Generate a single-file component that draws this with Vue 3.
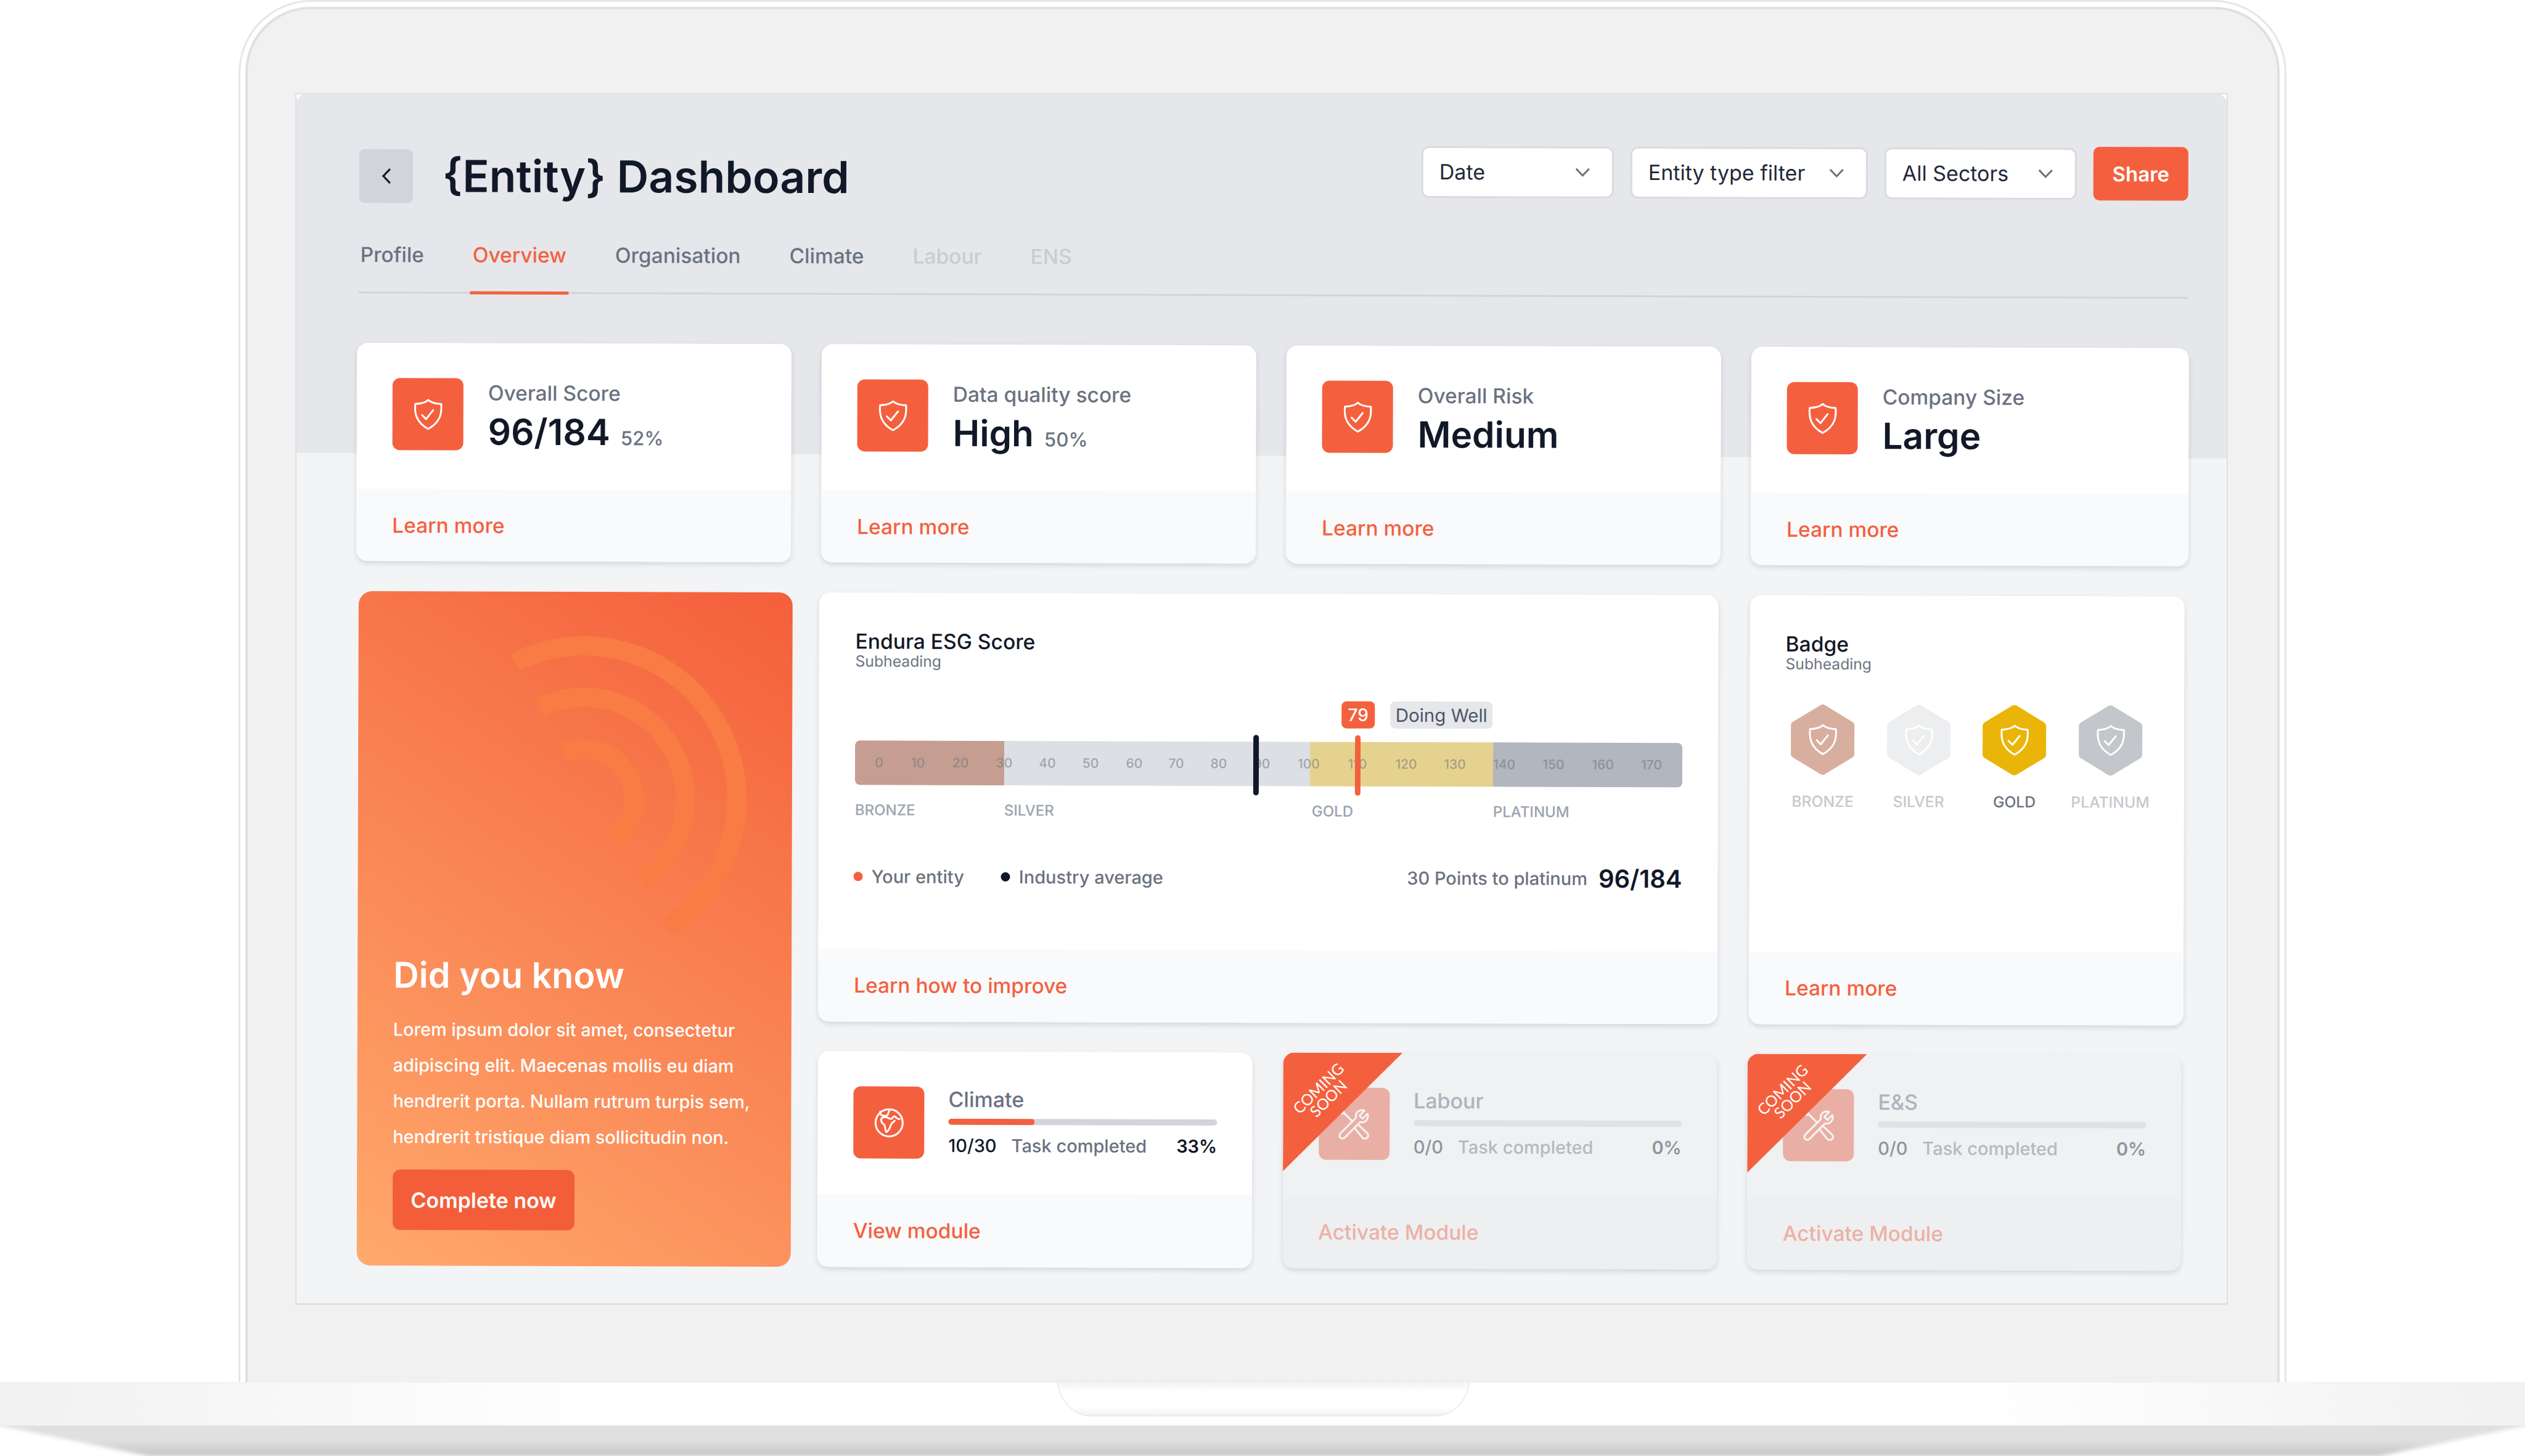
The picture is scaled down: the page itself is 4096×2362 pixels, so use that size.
<script setup>
const stats = [
  { label: 'Overall Score', value: '96/184', sub: '52%' },
  { label: 'Data quality score', value: 'High', sub: '50%' },
  { label: 'Overall Risk', value: 'Medium', sub: '' },
  { label: 'Company Size', value: 'Large', sub: '' },
]
const tabs = [
  { name: 'Profile' },
  { name: 'Overview', active: true },
  { name: 'Organisation' },
  { name: 'Climate' },
  { name: 'Labour', off: true },
  { name: 'ENS', off: true },
]
const filters = ['Date', 'Entity type filter', 'All Sectors']
const segments = [
  { name: 'BRONZE', width: 242, color: '#c59e91' },
  { name: 'SILVER', width: 496, color: '#dcdfe4' },
  { name: 'GOLD', width: 297, color: '#e6d28f' },
  { name: 'PLATINUM', width: 307, color: '#b2b6be' },
]
const ticks = [
  [0, 39], [10, 102], [20, 171], [30, 242], [40, 312], [50, 382], [60, 453], [70, 521], [80, 590],
  [90, 660], [100, 736], [110, 815], [120, 894], [130, 973], [140, 1053], [150, 1133], [160, 1213], [170, 1292],
]
const badges = [
  { name: 'BRONZE', color: '#d8ae9f' },
  { name: 'SILVER', color: '#edeef0' },
  { name: 'GOLD', color: '#eab508', on: true },
  { name: 'PLATINUM', color: '#c3c6ca' },
]
const cx = 366
const cy = 336
function arc(r, a, b) {
  const pt = (d) => {
    const t = (d * Math.PI) / 180
    return `${(cx + r * Math.sin(t)).toFixed(1)} ${(cy - r * Math.cos(t)).toFixed(1)}`
  }
  return `M${pt(a)} A${r} ${r} 0 0 1 ${pt(b)}`
}
const rings = [arc(248, -27, 147), arc(165, -26, 145), arc(81, -23, 142)]
const soon = [
  { title: 'Labour', action: 'Activate Module' },
  { title: 'E&S', action: 'Activate Module' },
]
</script>

<template>
  <div class="page">
    <div class="shell">
      <div class="bezel">
        <div class="screen">
          <main class="content">
            <header class="topbar">
              <div class="title-group">
                <button class="back" aria-label="Back">
                  <svg width="16" height="27" viewBox="0 0 16 27"><path d="M14 2 L3 13.5 L14 25" fill="none" stroke="#111827" stroke-width="3" /></svg>
                </button>
                <h1>{Entity} Dashboard</h1>
              </div>
              <div class="filters">
                <div v-for="f in filters" :key="f" class="filter">
                  <span>{{ f }}</span>
                  <svg width="25" height="15" viewBox="0 0 25 15"><path d="M2 2 L12.5 13 L23 2" fill="none" stroke="#6b7280" stroke-width="3" /></svg>
                </div>
                <button class="share">Share</button>
              </div>
            </header>

            <nav class="tabs">
              <a v-for="t in tabs" :key="t.name" class="tab" :class="{ active: t.active, off: t.off }">{{ t.name }}</a>
            </nav>

            <section class="stats">
              <article v-for="s in stats" :key="s.label" class="card stat">
                <div class="card-top stat-top">
                  <div class="icon-box">
                    <svg width="48" height="50" viewBox="0 0 48 50"><path d="M24 1.5 C28 5.5 35 7.5 45 8 C46.5 24 43 38 24 48.5 C5 38 1.5 24 3 8 C13 7.5 20 5.5 24 1.5 Z M14 26 L20.5 32.5 L32 18" fill="none" stroke="#fff" stroke-width="3" stroke-linecap="round" stroke-linejoin="round" /></svg>
                  </div>
                  <div class="stat-text">
                    <div class="stat-label">{{ s.label }}</div>
                    <div class="stat-value">{{ s.value }}<small v-if="s.sub">{{ s.sub }}</small></div>
                  </div>
                </div>
                <div class="card-foot stat-foot"><a class="link">Learn more</a></div>
              </article>
            </section>

            <section class="lower">
              <article class="promo">
                <svg class="rings" width="704" height="800" viewBox="0 0 704 800">
                  <path v-for="(d, i) in rings" :key="i" :d="d" fill="none" stroke="#fa7c45" stroke-width="31" />
                </svg>
                <h2>Did you know</h2>
                <p>Lorem ipsum dolor sit amet, consectetur<br />adipiscing elit. Maecenas mollis eu diam<br />hendrerit porta. Nullam rutrum turpis sem,<br />hendrerit tristique diam sollicitudin non.</p>
                <button class="cta">Complete now</button>
              </article>

              <div class="right-col">
                <div class="score-row">
                  <article class="card esg">
                    <div class="esg-body">
                      <h3>Endura ESG Score</h3>
                      <div class="subheading">Subheading</div>
                      <div class="chips"><span class="chip-score">79</span><span class="chip-text">Doing Well</span></div>
                      <div class="bar">
                        <div v-for="s in segments" :key="s.name" class="segment" :style="{ width: s.width + 'px', background: s.color }"></div>
                        <span v-for="t in ticks" :key="t[0]" class="tick" :style="{ left: t[1] + 'px' }">{{ t[0] }}</span>
                        <i class="marker marker-dark"></i>
                        <i class="marker marker-orange"></i>
                      </div>
                      <div class="tiers">
                        <span v-for="s in segments" :key="s.name" :style="{ width: s.width + 'px' }">{{ s.name }}</span>
                      </div>
                      <div class="legend">
                        <span class="legend-item"><i class="dot dot-orange"></i>Your entity</span>
                        <span class="legend-item"><i class="dot dot-dark"></i>Industry average</span>
                        <span class="points">30 Points to platinum<b>96/184</b></span>
                      </div>
                    </div>
                    <div class="card-foot esg-foot"><a class="link">Learn how to improve</a></div>
                  </article>

                  <article class="card badge-card">
                    <div class="badge-body">
                      <h3>Badge</h3>
                      <div class="subheading">Subheading</div>
                      <div class="badges">
                        <div v-for="b in badges" :key="b.name" class="badge" :class="{ on: b.on }">
                          <svg width="105" height="116" viewBox="0 0 105 116">
                            <path d="M52.5 8 L97 35 V81 L52.5 108 L8 81 V35 Z" :fill="b.color" :stroke="b.color" stroke-width="14" stroke-linejoin="round" />
                            <g transform="translate(29 33)">
                              <path d="M24 1.5 C28 5.5 35 7.5 45 8 C46.5 24 43 38 24 48.5 C5 38 1.5 24 3 8 C13 7.5 20 5.5 24 1.5 Z M14 26 L20.5 32.5 L32 18" fill="none" stroke="#fff" stroke-width="3" stroke-linecap="round" stroke-linejoin="round" />
                            </g>
                          </svg>
                          <span>{{ b.name }}</span>
                        </div>
                      </div>
                    </div>
                    <div class="card-foot esg-foot"><a class="link">Learn more</a></div>
                  </article>
                </div>

                <div class="module-row">
                  <article class="card module">
                    <div class="card-top module-top">
                      <div class="icon-box">
                        <svg width="48" height="48" viewBox="0 0 48 48"><g fill="none" stroke="#fff" stroke-width="3" stroke-linecap="round" stroke-linejoin="round"><circle cx="24" cy="24" r="22" /><path d="M9.5 6 C9 9 10 12 13 12 C16 12 18 13.5 20 12.5 C23 11 23 6 24.5 2.5" /><path d="M41 18 C38 18 36 16 33 13.5 C30 13 30 16 28 17.5 C24 18.5 21 14 17 14.5 C13 15 11 17 11 19 C11 23 13 25 16 27 C18 30 17 35 19.5 39 C23 38 25 33 27 27 C28 23 32 23 33 20.5" /></g></svg>
                      </div>
                      <div class="module-text">
                        <div class="module-title">Climate</div>
                        <div class="track"><div class="fill" :style="{ width: '32%' }"></div></div>
                        <div class="module-stats"><b>10/30</b><span>Task completed</span><b class="pct">33%</b></div>
                      </div>
                    </div>
                    <div class="card-foot module-foot"><a class="link">View module</a></div>
                  </article>

                  <article v-for="m in soon" :key="m.title" class="card module disabled">
                    <div class="card-top module-top">
                      <div class="icon-box">
                        <svg width="50" height="50" viewBox="0 0 50 50"><g fill="none" stroke="#f3f4f6" stroke-width="3" stroke-linecap="round" stroke-linejoin="round"><path d="M42 3 L34 11 L39 16 L47 8 C50 16 43 24 35 21.5 L11 46 C8 49 5 49 3 47 C1 45 1 42 4 39 L28.5 14.5 C26 7 33 0 42 3 Z" /><path d="M32 26 L46 39 C49 42 49 44 47 46.5 C45 49 41 49 39 47 L26 31" /><path d="M22 20 L9 7 L5 8 L2 5 L4.5 2 L8 5 L9 7" /></g></svg>
                      </div>
                      <div class="module-text">
                        <div class="module-title">{{ m.title }}</div>
                        <div class="track"></div>
                        <div class="module-stats"><b>0/0</b><span>Task completed</span><b class="pct">0%</b></div>
                      </div>
                    </div>
                    <div class="card-foot module-foot"><a class="link">{{ m.action }}</a></div>
                    <div class="ribbon"><div class="ribbon-text">COMING<br />SOON</div></div>
                  </article>
                </div>
              </div>
            </section>
          </main>
        </div>
      </div>
    </div>

    <div class="base">
      <svg class="notch" width="671" height="60" viewBox="0 0 671 60">
        <defs>
          <linearGradient id="notchFill" x1="0" y1="0" x2="0" y2="1">
            <stop offset="0" stop-color="#efefef" />
            <stop offset="0.3" stop-color="#ffffff" />
            <stop offset="0.75" stop-color="#ffffff" />
            <stop offset="1" stop-color="#f2f2f2" />
          </linearGradient>
        </defs>
        <path d="M1 0 H670 V2 C668 27 647 58 615 58 H56 C24 58 3 27 1 2 Z" fill="url(#notchFill)" stroke="#e8e8e8" stroke-width="1.5" />
      </svg>
    </div>
    <div class="under">
      <div class="under-blur"><div class="under-shape"></div></div>
    </div>
  </div>
</template>

<style scoped>
.page {
  width: 4096px;
  height: 2362px;
  overflow: hidden;
  background: #fff;
  font-family: Inter, "Liberation Sans", sans-serif;
  color: #111827;
}
.shell {
  box-sizing: border-box;
  width: 3322px;
  height: 2242px;
  margin-left: 387px;
  padding: 8px 8px 0;
  border: 3px solid #e6e6e6;
  border-bottom: 0;
  border-radius: 118px 118px 0 0;
}
.bezel {
  box-sizing: border-box;
  height: 100%;
  padding: 136px 77px 0;
  border: 4px solid #e0e0e0;
  border-bottom: 0;
  border-radius: 106px 106px 0 0;
  background: #f1f1f1;
}
.screen {
  position: relative;
  box-sizing: border-box;
  width: 3135px;
  height: 1966px;
  overflow: hidden;
  border: 2px solid #dfe0e2;
  border-bottom-width: 3px;
  background: #f3f4f6;
}
.screen::before,
.screen::after {
  content: "";
  position: absolute;
  z-index: 2;
  top: 0;
  width: 9px;
  height: 9px;
  background: #fff;
}
.screen::before {
  left: 0;
  clip-path: polygon(0 0, 100% 0, 0 100%);
}
.screen::after {
  right: 0;
  clip-path: polygon(0 0, 100% 0, 100% 100%);
}
.content {
  position: relative;
  box-sizing: border-box;
  height: 100%;
  padding: 77px 0 0 98px;
  transform: rotate(0.166deg);
  transform-origin: 99px 404px;
}
.content::before {
  content: "";
  position: absolute;
  left: -100px;
  right: -100px;
  top: -100px;
  height: 682px;
  background: #e5e7eb;
}
.content > * {
  position: relative;
}
.topbar {
  display: flex;
  justify-content: space-between;
  align-items: flex-start;
  width: 2970px;
  height: 100px;
}
.title-group {
  display: flex;
  align-items: center;
  gap: 48px;
  margin: 12px 0 0 3px;
}
.back {
  display: flex;
  align-items: center;
  justify-content: center;
  width: 87px;
  height: 87px;
  padding: 0;
  border: 0;
  border-radius: 8px;
  background: #d1d5db;
}
h1 {
  margin: 0;
  font-size: 71.5px;
  line-height: 87px;
  font-weight: 600;
  white-space: nowrap;
}
.filters {
  display: flex;
  align-items: center;
  gap: 27px;
  height: 87px;
}
.filter {
  box-sizing: border-box;
  display: flex;
  align-items: center;
  justify-content: space-between;
  width: 312px;
  height: 84px;
  padding: 0 35px 0 26px;
  border: 3px solid #d9dbe0;
  border-radius: 12px;
  background: #fff;
  font-size: 34px;
  font-weight: 400;
  color: #1f2937;
  white-space: nowrap;
}
.filter:nth-child(2) {
  width: 385px;
}
.share {
  width: 154px;
  height: 87px;
  padding: 0;
  border: 0;
  border-radius: 10px;
  background: #f4603e;
  color: #fff;
  font: 600 33px Inter, sans-serif;
}
.tabs {
  display: flex;
  gap: 71px;
  width: 2967px;
  margin: 61px 0 0 3px;
  border-bottom: 3px solid #d1d5db;
}
.tab {
  margin-bottom: -4px;
  padding: 0 4px 37px;
  border-bottom: 5px solid transparent;
  font-size: 33.5px;
  line-height: 44px;
  font-weight: 500;
  color: #6b7280;
}
.tab:first-child {
  margin-left: -2px;
}
.tab.active {
  color: #f4603e;
  border-bottom-color: #f4603e;
}
.tab.off {
  color: #c9ccd2;
}
.stats {
  display: grid;
  grid-template-columns: 705px 705px 705px 710px;
  gap: 49px;
  width: 2972px;
  margin-top: 80px;
}
.card {
  position: relative;
  display: flex;
  flex-direction: column;
  overflow: hidden;
  border-radius: 18px;
  background: #fff;
  box-shadow: 0 4px 8px rgba(17, 24, 39, 0.13);
}
.stat {
  height: 354px;
}
.card-top {
  display: flex;
  flex: 1;
  box-sizing: border-box;
  padding: 57px 57px 0 58px;
}
.icon-box {
  display: flex;
  flex: none;
  align-items: center;
  justify-content: center;
  width: 115px;
  height: 117px;
  border-radius: 12px;
  background: #f4603e;
}
.stat-text {
  margin-left: 40px;
}
.stat-label {
  margin-top: 2px;
  font-size: 33.5px;
  line-height: 44px;
  font-weight: 500;
  color: #6b7280;
}
.stat-value {
  margin-top: 10px;
  font-size: 58.5px;
  line-height: 62px;
  font-weight: 600;
}
.stat-value small {
  margin-left: 17px;
  font-size: 31.3px;
  font-weight: 500;
  color: #6b7280;
}
.card-foot {
  display: flex;
  align-items: center;
  box-sizing: border-box;
  padding-left: 58px;
  background: #f9fafb;
}
.stat-foot {
  height: 117px;
}
.esg-foot {
  height: 118px;
}
.module-foot {
  height: 119px;
}
.link {
  font-size: 33.5px;
  font-weight: 500;
  color: #f4603e;
}
.lower {
  display: grid;
  grid-template-columns: 704px 2215px;
  gap: 43px;
  height: 1094px;
  margin: 49px 0 0 4px;
}
.promo {
  position: relative;
  display: flex;
  flex-direction: column;
  justify-content: flex-end;
  align-items: flex-start;
  box-sizing: border-box;
  padding: 0 58px 58px;
  border-radius: 22px;
  overflow: hidden;
  background: linear-gradient(214deg, #f45f3b, #ffa96c);
  color: #fff;
}
.rings {
  position: absolute;
  left: 0;
  top: 0;
}
.promo h2,
.promo p,
.promo .cta {
  position: relative;
}
.promo h2 {
  margin: 0 0 22px;
  font-size: 57.5px;
  line-height: 76px;
  font-weight: 600;
}
.promo p {
  margin: 0 0 24px;
  font-size: 28.8px;
  line-height: 58px;
  font-weight: 500;
  white-space: nowrap;
}
.cta {
  width: 295px;
  height: 98px;
  padding: 0;
  border: 0;
  border-radius: 12px;
  background: #f45d3a;
  color: #fff;
  font: 600 34px Inter, sans-serif;
}
.right-col {
  display: flex;
  flex-direction: column;
  gap: 48px;
}
.score-row {
  display: flex;
  gap: 51px;
  height: 696px;
}
.esg {
  width: 1459px;
}
.badge-card {
  width: 705px;
}
.esg-body {
  flex: 1;
  padding: 61px 58px 0 59px;
}
.badge-body {
  flex: 1;
  padding: 61px 0 0 58px;
}
h3 {
  margin: 0;
  font-size: 33.6px;
  line-height: 36px;
  font-weight: 500;
}
.subheading {
  margin-top: -1px;
  font-size: 24.7px;
  line-height: 30px;
  font-weight: 400;
  color: #6b7280;
}
.chips {
  display: flex;
  gap: 25px;
  height: 44px;
  margin: 48px 0 0 789px;
}
.chip-score {
  width: 54px;
  border-radius: 8px;
  background: #f4603e;
  color: #fff;
  font-size: 28px;
  line-height: 44px;
  font-weight: 500;
  text-align: center;
}
.chip-text {
  box-sizing: border-box;
  width: 166px;
  border-radius: 8px;
  background: #e5e7eb;
  color: #4b5563;
  font-size: 29.5px;
  line-height: 44px;
  font-weight: 400;
  text-align: center;
}
.bar {
  position: relative;
  display: flex;
  width: 1342px;
  height: 72px;
  margin-top: 22px;
}
.segment:first-child {
  border-radius: 8px 0 0 8px;
}
.segment:nth-child(4) {
  border-radius: 0 8px 8px 0;
}
.tick {
  position: absolute;
  top: 0;
  transform: translateX(-50%);
  font-size: 21px;
  line-height: 72px;
  font-weight: 500;
  color: rgba(107, 114, 128, 0.55);
}
.marker {
  position: absolute;
  top: -11px;
  width: 9px;
  height: 98px;
  border-radius: 5px;
}
.marker-dark {
  left: 646px;
  background: #111827;
}
.marker-orange {
  left: 811px;
  background: #f4603e;
}
.tiers {
  display: flex;
  margin-top: 27px;
  font-size: 24px;
  line-height: 28px;
  font-weight: 500;
  color: #9ca3af;
}
.tiers span:nth-child(3) {
  padding-left: 3px;
  margin-right: -3px;
}
.legend {
  display: flex;
  align-items: center;
  gap: 62px;
  height: 42px;
  margin-top: 72px;
  font-size: 29px;
  font-weight: 500;
  color: #6b7280;
}
.legend-item {
  display: flex;
  align-items: center;
  gap: 14px;
}
.dot {
  width: 15px;
  height: 15px;
  margin-left: -2px;
  border-radius: 50%;
}
.dot-orange {
  background: #f4603e;
}
.dot-dark {
  background: #111827;
}
.points {
  display: flex;
  align-items: center;
  gap: 18px;
  margin-left: auto;
}
.points b {
  font-size: 40px;
  font-weight: 600;
  color: #111827;
}
.badges {
  display: grid;
  grid-template-columns: repeat(4, 155.5px);
  margin: 50px 0 0 -17px;
}
.badge {
  display: flex;
  flex-direction: column;
  align-items: center;
  font-size: 24.7px;
  font-weight: 500;
  color: #c5c9d0;
}
.badge svg {
  display: block;
}
.badge span {
  margin-top: 26px;
  line-height: 32px;
}
.badge.on {
  color: #6b7280;
}
.module-row {
  display: grid;
  grid-template-columns: 705px 704px 704px;
  gap: 48px 49.5px;
  height: 350px;
}
.module-top {
  gap: 39px;
}
.module-text {
  flex: 1;
  min-width: 0;
}
.module-title {
  margin-top: -1px;
  font-size: 34px;
  line-height: 44px;
  font-weight: 500;
  color: #6b7280;
}
.track {
  height: 10px;
  margin-top: 9px;
  overflow: hidden;
  border-radius: 5px;
  background: #d1d5db;
}
.fill {
  height: 100%;
  border-radius: 5px;
  background: #f4603e;
}
.module-stats {
  display: flex;
  align-items: center;
  height: 40px;
  margin-top: 13px;
  font-size: 29px;
  font-weight: 500;
  color: #6b7280;
}
.module-stats b {
  font-weight: 500;
  color: #111827;
}
.module-stats span {
  margin-left: 24px;
}
.module-stats .pct {
  margin-left: auto;
  font-weight: 600;
}
.disabled {
  background: #f0f1f3;
}
.disabled .card-foot {
  background: #eeeff1;
}
.disabled .icon-box {
  background: #eaafa4;
}
.disabled .module-title {
  color: #aeb3bc;
}
.disabled .track {
  background: #dfe1e5;
}
.disabled .module-stats {
  color: #b5b9c0;
}
.disabled .module-stats b {
  color: #8f949c;
}
.disabled .link {
  color: #ecb1a5;
}
.ribbon {
  position: absolute;
  left: 0;
  top: 0;
  width: 194px;
  height: 193px;
  background: #f4603e;
  clip-path: polygon(0 0, 100% 0, 0 100%);
}
.ribbon-text {
  position: absolute;
  left: 65px;
  top: 66px;
  transform: translate(-50%, -50%) rotate(-45deg);
  font-family: Lato, sans-serif;
  font-size: 25px;
  line-height: 23px;
  color: #fff;
  text-align: center;
}
.base {
  position: relative;
  height: 71px;
  box-sizing: border-box;
  border-top: 1px solid #f0f0f0;
  border-bottom: 1px solid #ececec;
  background: linear-gradient(to right, #f1f1f1 0, #fff 24%, #fff 78%, #f1f1f1 100%);
}
.notch {
  position: absolute;
  left: 1714px;
  top: -4px;
}
.under {
  height: 49px;
  overflow: hidden;
  background: #fff;
}
.under-blur {
  margin: -20px -120px 0;
  filter: blur(3px);
}
.under-shape {
  height: 110px;
  background: linear-gradient(#e1e1e1 0, #e0e0e0 40%, #c6c6c6 62%, #c4c4c4 100%);
  clip-path: polygon(22px 0, 4314px 0, 3980px 69px, 360px 69px);
}
</style>

<style>
html,
body {
  margin: 0;
  background: #fff;
}
</style>
